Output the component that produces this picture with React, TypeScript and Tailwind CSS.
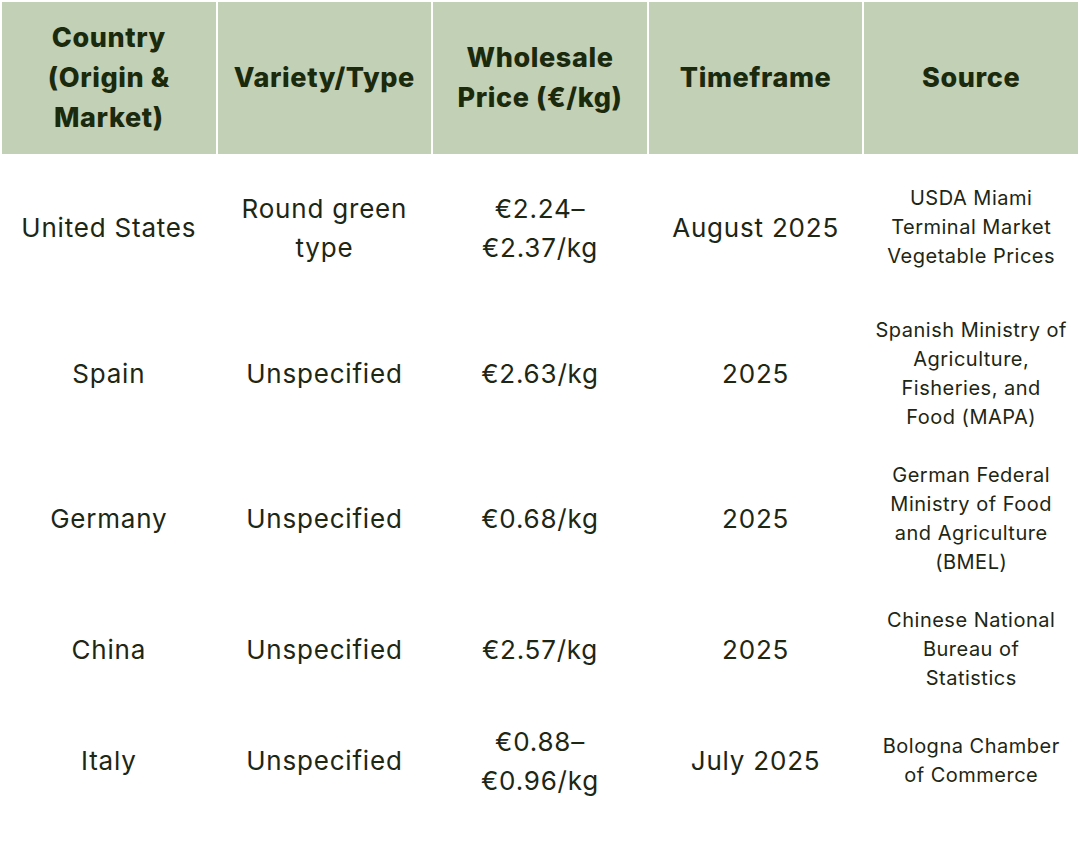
import React from 'react';

interface Row {
  country: string;
  variety: string[];
  price: string[];
  timeframe: string;
  source: string[];
  pad: string;
}

const rows: Row[] = [
  {
    country: 'United States',
    variety: ['Round green', 'type'],
    price: ['€2.24–', '€2.37/kg'],
    timeframe: 'August 2025',
    source: ['USDA Miami', 'Terminal Market', 'Vegetable Prices'],
    pad: 'pt-[30px] pb-[30px]',
  },
  {
    country: 'Spain',
    variety: ['Unspecified'],
    price: ['€2.63/kg'],
    timeframe: '2025',
    source: ['Spanish Ministry of', 'Agriculture,', 'Fisheries, and', 'Food (MAPA)'],
    pad: 'py-[14.5px]',
  },
  {
    country: 'Germany',
    variety: ['Unspecified'],
    price: ['€0.68/kg'],
    timeframe: '2025',
    source: ['German Federal', 'Ministry of Food', 'and Agriculture', '(BMEL)'],
    pad: 'py-[14.5px]',
  },
  {
    country: 'China',
    variety: ['Unspecified'],
    price: ['€2.57/kg'],
    timeframe: '2025',
    source: ['Chinese National', 'Bureau of', 'Statistics'],
    pad: 'py-[14.5px]',
  },
  {
    country: 'Italy',
    variety: ['Unspecified'],
    price: ['€0.88–', '€0.96/kg'],
    timeframe: 'July 2025',
    source: ['Bologna Chamber', 'of Commerce'],
    pad: 'py-[14.5px]',
  },
];

const headers = [
  ['Country', '(Origin &', 'Market)'],
  ['Variety/Type'],
  ['Wholesale', 'Price (€/kg)'],
  ['Timeframe'],
  ['Source'],
];

const Lines = ({ lines }: { lines: string[] }) => (
  <>
    {lines.map((l, i) => (
      <div key={i} className="whitespace-nowrap">{l}</div>
    ))}
  </>
);

const bigCell =
  'flex flex-col items-center justify-center text-center text-[26px] leading-[39px] tracking-[0.8px]';

export default function App() {
  return (
    <div
      className="w-[1080px] h-[852px] bg-white overflow-hidden"
      style={{ fontFamily: 'Inter, "Noto Sans", sans-serif' }}
    >
      {/* header */}
      <div className="grid grid-cols-5 gap-x-[2px] px-[2px] pt-[2px]">
        {headers.map((h, i) => (
          <div
            key={i}
            className="h-[152px] bg-[#c2d0b5] flex flex-col items-center justify-center text-center text-[27px] leading-[40px] font-extrabold tracking-[0.6px] text-[#1b2a0c]"
          >
            <Lines lines={h} />
          </div>
        ))}
      </div>

      {/* body */}
      <div className="text-[#1e2614]">
        {rows.map((r, i) => (
          <div key={i} className={`grid grid-cols-5 gap-x-[2px] px-[2px] ${r.pad}`}>
            <div className={bigCell}>{r.country}</div>
            <div className={bigCell}>
              <Lines lines={r.variety} />
            </div>
            <div className={bigCell}>
              <Lines lines={r.price} />
            </div>
            <div className={bigCell}>{r.timeframe}</div>
            <div className="flex flex-col items-center justify-center text-center text-[20px] leading-[29px] tracking-[0.5px]">
              <Lines lines={r.source} />
            </div>
          </div>
        ))}
      </div>
    </div>
  );
}
